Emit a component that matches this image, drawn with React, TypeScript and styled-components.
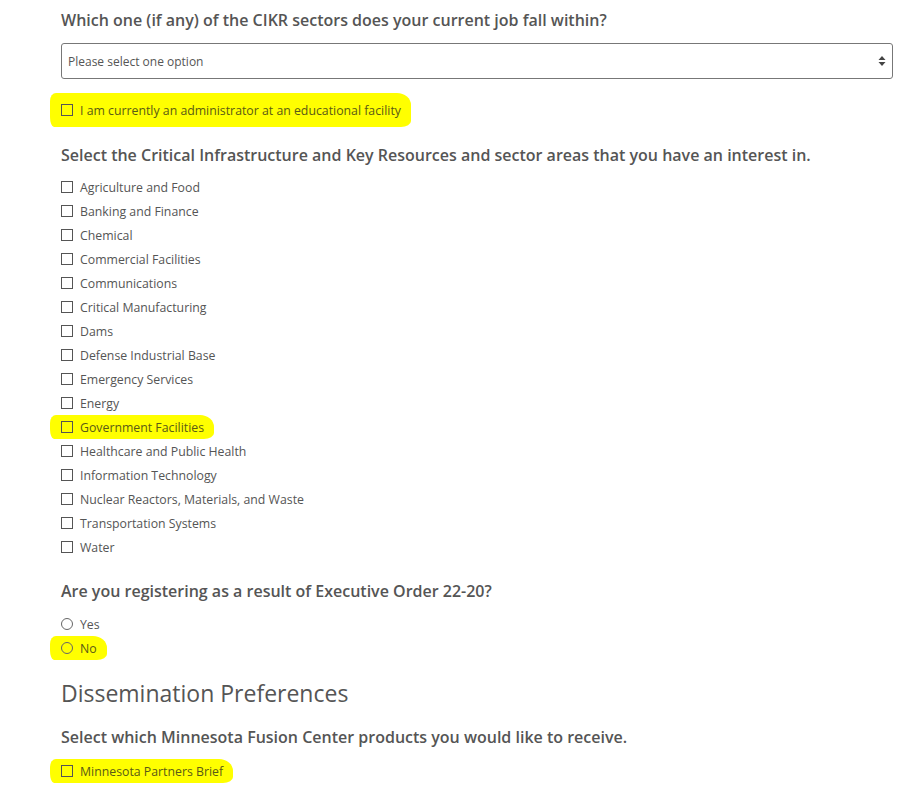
import React from "react";
import styled, { createGlobalStyle } from "styled-components";

const Global = createGlobalStyle`
  html, body { margin: 0; padding: 0; background: #fff; }
  body { font-family: "Open Sans", "Liberation Sans", sans-serif; color: #555; }
`;

const Page = styled.div`
  width: 832px;
  padding: 0 0 0 61px;
`;

const Question = styled.h3<{ $top: number }>`
  margin: ${(p) => p.$top}px 0 0 0;
  font-size: 16px;
  font-weight: 600;
  line-height: 24px;
  color: #555;
`;

const Section = styled.h2<{ $top: number }>`
  margin: ${(p) => p.$top}px 0 0 0;
  font-size: 23px;
  font-weight: 400;
  line-height: 32px;
  color: #555;
`;

const SelectBox = styled.div`
  margin-top: 11px;
  height: 36px;
  box-sizing: border-box;
  border: 1px solid #777;
  border-radius: 3px;
  display: flex;
  align-items: center;
  justify-content: space-between;
  padding: 0 6px 0 6px;
  font-size: 12px;
  color: #555;
`;

const Arrows = styled.svg`
  width: 8px;
  height: 12px;
`;

const List = styled.div<{ $top: number }>`
  margin-top: ${(p) => p.$top}px;
  display: flex;
  flex-direction: column;
`;

const Row = styled.label<{ $hl?: boolean }>`
  display: flex;
  align-items: center;
  gap: 7px;
  height: 24px;
  font-size: 12.3px;
  color: ${(p) => (p.$hl ? "#5a5a16" : "#555")};
  width: fit-content;
  margin-left: ${(p) => (p.$hl ? -11 : 0)}px;
  padding: 0 ${(p) => (p.$hl ? 10 : 0)}px 0 ${(p) => (p.$hl ? 11 : 0)}px;
  background: ${(p) => (p.$hl ? "#ffff00" : "transparent")};
  border-radius: ${(p) => (p.$hl ? "6px 14px 10px 4px / 8px 12px 6px 10px" : "0")};
`;

const Box = styled.span<{ $round?: boolean }>`
  width: 12px;
  height: 12px;
  box-sizing: border-box;
  border: 1px solid ${(p) => (p.$round ? "#666" : "#555")};
  border-radius: ${(p) => (p.$round ? "50%" : "0")};
  flex: none;
`;

const BigRow = styled(Row)`
  height: 34px;
`;

const sectors = [
  "Agriculture and Food",
  "Banking and Finance",
  "Chemical",
  "Commercial Facilities",
  "Communications",
  "Critical Manufacturing",
  "Dams",
  "Defense Industrial Base",
  "Emergency Services",
  "Energy",
  "Government Facilities",
  "Healthcare and Public Health",
  "Information Technology",
  "Nuclear Reactors, Materials, and Waste",
  "Transportation Systems",
  "Water",
];

export default function App() {
  return (
    <Page>
      <Global />
      <Question $top={8}>Which one (if any) of the CIKR sectors does your current job fall within?</Question>
      <SelectBox>
        <span>Please select one option</span>
        <Arrows viewBox="0 0 8 12">
          <path d="M4 1 L7.5 5 H0.5 Z" fill="#444" />
          <path d="M4 11 L7.5 7 H0.5 Z" fill="#444" />
        </Arrows>
      </SelectBox>
      <List $top={14}>
        <BigRow $hl>
          <Box />
          I am currently an administrator at an educational facility
        </BigRow>
      </List>
      <Question $top={16}>
        Select the Critical Infrastructure and Key Resources and sector areas that you have an interest in.
      </Question>
      <List $top={8}>
        {sectors.map((s) => (
          <Row key={s} $hl={s === "Government Facilities"}>
            <Box />
            {s}
          </Row>
        ))}
      </List>
      <Question $top={20}>Are you registering as a result of Executive Order 22-20?</Question>
      <List $top={9}>
        <Row>
          <Box $round />
          Yes
        </Row>
        <Row $hl>
          <Box $round />
          No
        </Row>
      </List>
      <Section $top={17}>Dissemination Preferences</Section>
      <Question $top={16}>Select which Minnesota Fusion Center products you would like to receive.</Question>
      <List $top={10}>
        <Row $hl>
          <Box />
          Minnesota Partners Brief
        </Row>
      </List>
    </Page>
  );
}
